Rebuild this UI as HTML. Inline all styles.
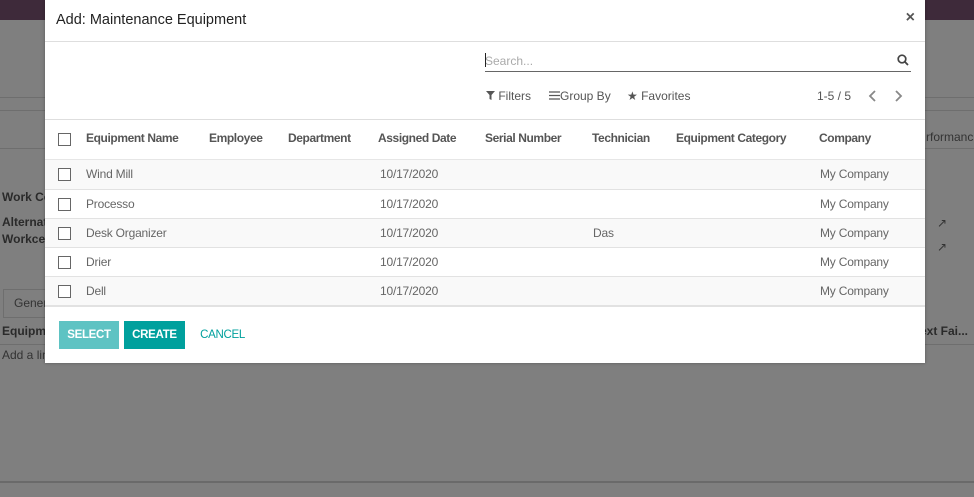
<!DOCTYPE html>
<html><head><meta charset="utf-8"><style>
*{margin:0;padding:0;box-sizing:border-box}
html{background-color:rgb(127,127,127)}
body{width:974px;height:497px;position:relative;overflow:hidden;font-family:"Liberation Sans",Arial,sans-serif;font-size:12px;color:#4c4c4c;background-color:rgb(127,127,127)}
.topbar{position:absolute;left:0;top:0;width:974px;height:20px;background-color:rgb(62,42,58)}
.bg{position:absolute;color:#2a2a2a;font-weight:bold;font-size:12px}
.line{position:absolute;left:0;width:974px;height:1px;background-color:rgb(110,110,110)}
.modal{position:absolute;left:45px;top:0;width:880px;height:363px;background:#fff;box-shadow:0 0 3px rgba(0,0,0,.3)}
.title{position:absolute;left:11px;top:12px;font-size:14.5px;color:#222}
.close{position:absolute;right:10px;top:9px;font-size:16px;color:#555;font-weight:bold}
.hr{position:absolute;left:0;width:880px;height:1px;background:#dedede}
.search{position:absolute;left:440px;top:50px;width:426px;height:22px;border-bottom:1px solid #666;color:#aaa;font-size:12px;padding-top:4px}
.search:before{content:"";position:absolute;left:0;top:3px;width:1px;height:14px;background:#222}
.tb{position:absolute;top:89px;font-size:12px;color:#555}
.hdr{position:absolute;top:131px;font-weight:bold;color:#555;font-size:12px;letter-spacing:-0.4px}
.row{position:absolute;left:0;width:880px;height:29px;border-top:1px solid #e2e2e2}
.row span{position:absolute;top:7px;font-size:12px;color:#666;letter-spacing:-0.2px}
.cb{position:absolute;left:13px;width:13px;height:13px;border:1.5px solid #666;background:#fff}
.btn{position:absolute;top:321px;height:28px;color:#fff;font-weight:bold;font-size:11.5px;line-height:28px;text-align:center;letter-spacing:-0.3px}
</style></head><body>
<svg style="position:absolute;left:0;top:0" width="974" height="497"><rect x="0" y="0" width="974" height="497" fill="#7f7f7f"/><rect x="0" y="0" width="974" height="20" fill="#3e2a3a"/><rect x="0" y="97" width="974" height="1" fill="#6e6e6e"/><rect x="0" y="110" width="974" height="1" fill="#6e6e6e"/><rect x="0" y="148" width="974" height="1" fill="#6e6e6e"/><rect x="0" y="344" width="974" height="1" fill="#6e6e6e"/><rect x="0" y="481" width="974" height="2" fill="#6a6a6a"/></svg>
<div class="bg" style="left:2px;top:190px">Work Ce</div>
<div class="bg" style="left:2px;top:215px">Alternat</div>
<div class="bg" style="left:2px;top:232px">Workcer</div>
<div style="position:absolute;left:3px;top:289px;width:60px;height:29px;border:1px solid #6e6e6e;color:#333;padding:6px 10px">Gener</div>
<div class="bg" style="left:2px;top:324px">Equipme</div>
<div style="position:absolute;left:2px;top:348px;color:#333">Add a lin</div>
<div style="position:absolute;left:926px;top:130px;color:#333">rformanc</div>
<div class="bg" style="left:920px;top:324px">ext Fai...</div>
<div style="position:absolute;left:937px;top:216px;color:#333">↗</div>
<div style="position:absolute;left:937px;top:240px;color:#333">↗</div>

<div class="modal">
<div class="title">Add: Maintenance Equipment</div>
<div class="close">×</div>
<div class="hr" style="top:41px"></div>
<div class="search">Search...
<svg style="position:absolute;right:2px;top:4px" width="12" height="12" viewBox="0 0 12 12"><circle cx="5" cy="5" r="3.8" fill="none" stroke="#444" stroke-width="1.7"/><line x1="7.8" y1="7.8" x2="11" y2="11" stroke="#444" stroke-width="1.8"/></svg></div>
<div class="tb" style="left:441px"><svg width="9" height="9" viewBox="0 0 9 9"><path d="M0 0H9L5.5 4V9L3.5 8V4Z" fill="#555"/></svg> Filters</div>
<div class="tb" style="left:504px"><svg width="11" height="9" viewBox="0 0 11 9"><path d="M0 1H11M0 4.5H11M0 8H11" stroke="#555" stroke-width="1.3"/></svg>Group By</div>
<div class="tb" style="left:582px"><span style="font-size:12px">★</span> Favorites</div>
<div class="tb" style="left:772px">1-5 / 5</div>
<svg style="position:absolute;left:823px;top:90px" width="10" height="12" viewBox="0 0 10 12"><path d="M7 1L2 6L7 11" fill="none" stroke="#888" stroke-width="1.8"/></svg>
<svg style="position:absolute;left:848px;top:90px" width="10" height="12" viewBox="0 0 10 12"><path d="M3 1L8 6L3 11" fill="none" stroke="#888" stroke-width="1.8"/></svg>
<div class="hr" style="top:119px"></div>
<div class="cb" style="top:133px"></div>
<div class="hdr" style="left:41px">Equipment Name</div>
<div class="hdr" style="left:164px">Employee</div>
<div class="hdr" style="left:243px">Department</div>
<div class="hdr" style="left:333px">Assigned Date</div>
<div class="hdr" style="left:440px">Serial Number</div>
<div class="hdr" style="left:547px">Technician</div>
<div class="hdr" style="left:631px">Equipment Category</div>
<div class="hdr" style="left:774px">Company</div>
<div class="hr" style="top:159px;height:2px;background:#e6e6e6"></div>
<div class="row" style="top:160px;background:#f9f9f9;border-top:none"><div class="cb" style="top:8px"></div><span style="left:41px">Wind Mill</span><span style="left:335px">10/17/2020</span><span style="left:775px">My Company</span></div>
<div class="row" style="top:189px"><div class="cb" style="top:8px"></div><span style="left:41px">Processo</span><span style="left:335px">10/17/2020</span><span style="left:775px">My Company</span></div>
<div class="row" style="top:218px;background:#f9f9f9"><div class="cb" style="top:8px"></div><span style="left:41px">Desk Organizer</span><span style="left:335px">10/17/2020</span><span style="left:548px">Das</span><span style="left:775px">My Company</span></div>
<div class="row" style="top:247px"><div class="cb" style="top:8px"></div><span style="left:41px">Drier</span><span style="left:335px">10/17/2020</span><span style="left:775px">My Company</span></div>
<div class="row" style="top:276px;background:#f9f9f9"><div class="cb" style="top:8px"></div><span style="left:41px">Dell</span><span style="left:335px">10/17/2020</span><span style="left:775px">My Company</span></div>
<div class="hr" style="top:305px;height:2px;background:#e2e2e2"></div>
<div class="btn" style="left:14px;width:60px;background:#5ec3c3">SELECT</div>
<div class="btn" style="left:79px;width:61px;background:#00a09d">CREATE</div>
<div class="btn" style="left:150px;width:55px;color:#00a09d;font-weight:normal">CANCEL</div>
</div>
</body></html>
